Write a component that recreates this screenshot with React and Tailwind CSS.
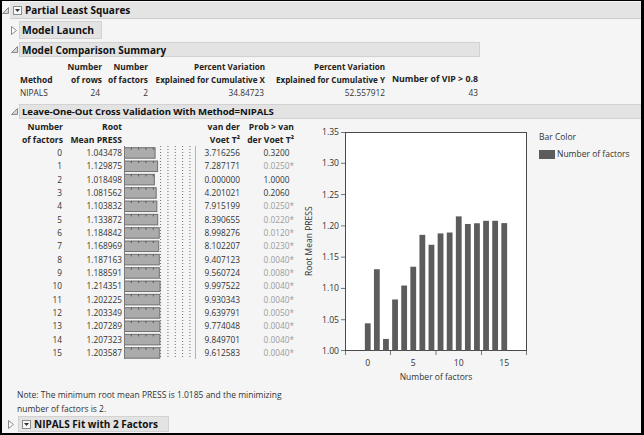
const rows = [
  [0, "1.043478", "3.716256", "0.3200", false],
  [1, "1.129875", "7.287171", "0.0250", true],
  [2, "1.018498", "0.000000", "1.0000", false],
  [3, "1.081562", "4.201021", "0.2060", false],
  [4, "1.103832", "7.915199", "0.0250", true],
  [5, "1.133872", "8.390655", "0.0220", true],
  [6, "1.184842", "8.998276", "0.0120", true],
  [7, "1.168969", "8.102207", "0.0230", true],
  [8, "1.187163", "9.407123", "0.0040", true],
  [9, "1.188591", "9.560724", "0.0080", true],
  [10, "1.214351", "9.997522", "0.0040", true],
  [11, "1.202225", "9.930343", "0.0040", true],
  [12, "1.203349", "9.639791", "0.0050", true],
  [13, "1.207289", "9.774048", "0.0040", true],
  [14, "1.207323", "9.849701", "0.0040", true],
  [15, "1.203587", "9.612583", "0.0040", true],
];

const ROW_H = 13.333;

function OpenTri() {
  return (
    <svg width="7" height="7" viewBox="0 0 7 7" className="block">
      <path d="M6.5 0.5 L6.5 6.5 L0.5 6.5 Z" fill="#d6d6d6" stroke="#8a8a8a" />
    </svg>
  );
}

function ClosedTri() {
  return (
    <svg width="6" height="9" viewBox="0 0 6 9" className="block">
      <path d="M0.5 0.5 L5.5 4.5 L0.5 8.5 Z" fill="#fff" stroke="#8a8a8a" />
    </svg>
  );
}

function MenuBox() {
  return (
    <span className="flex h-[9px] w-[9px] shrink-0 items-center justify-center border border-[#8c8c8c] bg-[#f8f8f8]">
      <svg width="5" height="3" viewBox="0 0 5 3" className="block">
        <path d="M0 0 H5 L2.5 3 Z" fill="#333" />
      </svg>
    </span>
  );
}

// little bar graph column inside the cross validation table
function PressBars() {
  const w = 72;
  const h = rows.length * ROW_H;
  const scale = 29.3;
  return (
    <svg width={w} height={h} className="block">
      {[1.25, 1.5, 1.75, 2, 2.25].map((v) => (
        <line key={v} x1={v * scale} x2={v * scale} y1="0" y2={h} stroke="#6e6e6e" strokeDasharray="1 2" />
      ))}
      {rows.map(([n, rmp], i) => {
        const bw = parseFloat(rmp) * scale;
        const y = i * ROW_H + 1.2;
        return (
          <g key={n}>
            <rect x="0.5" y={y + 0.5} width={bw} height="10.5" fill="#ababab" stroke="#6f6f6f" />
            {[1, 2, 3, 4].map((k) => (
              <line key={k} x1={k * scale * 0.25} x2={k * scale * 0.25} y1={y + 0.5} y2={y + 2.5} stroke="#555" />
            ))}
          </g>
        );
      })}
      <line x1="0.5" x2="0.5" y1="0" y2={h} stroke="#7a7a7a" />
      <line x1={w - 0.5} x2={w - 0.5} y1="0" y2={h} stroke="#b4b4b4" />
    </svg>
  );
}

function PressChart() {
  const W = 182;
  const H = 219;
  const ux = 9.1;
  const uy = 625.7;
  return (
    <svg width={W} height={H} className="block overflow-visible">
      <rect x="0.5" y="0.5" width={W - 1} height={H - 1} fill="#fff" stroke="#4a4a4a" />
      {rows.map(([n, rmp]) => {
        const cx = (n + 2.5) * ux;
        const bh = (parseFloat(rmp) - 1) * uy;
        return <rect key={n} x={cx - 2.9} y={H - 0.5 - bh} width="5.8" height={bh} fill="#5c5c5c" />;
      })}
      {[0, 1, 2, 3, 4, 5, 6, 7].map((k) => {
        const y = Math.min(H - 0.5, Math.max(0.5, H - k * 0.05 * uy));
        return <line key={k} x1="-4" x2="0" y1={y} y2={y} stroke="#777" />;
      })}
      {[0, 45.5, 91, 136.5, 182].map((x) => {
        const xx = Math.min(W - 0.5, Math.max(0.5, x));
        return <line key={x} x1={xx} x2={xx} y1={H} y2={H + 4} stroke="#777" />;
      })}
    </svg>
  );
}

export default function App() {
  return (
    <div className="h-[435px] w-[644px] overflow-hidden bg-black pb-[2px] pl-[2px] pr-[3px] pt-[1px] font-['Open_Sans',sans-serif] text-[#222]">
      <div className="flex h-full flex-col bg-[#f5f5f5]">
        {/* ── Partial Least Squares ── */}
        <div className="mt-[1px] flex h-[17px] items-center">
          <div className="flex w-[8px] justify-start">
            <OpenTri />
          </div>
          <div className="flex h-full flex-1 items-center border-b border-[#cdcdcd] bg-[#e4e4e4] pl-[3px]">
            <MenuBox />
            <span className="ml-[3px] text-[10px] font-bold leading-none text-[#111]">Partial Least Squares</span>
          </div>
        </div>

        {/* ── Model Launch ── */}
        <div className="mt-[2px] flex h-[18px] items-center">
          <div className="flex w-[17px] justify-end pr-[2px]">
            <ClosedTri />
          </div>
          <div className="flex h-full w-[83px] items-center border border-[#d2d2d2] bg-[#e3e3e3] pl-[2px]">
            <span className="text-[10.3px] font-bold leading-none text-[#111]">Model Launch</span>
          </div>
        </div>

        {/* ── Model Comparison Summary ── */}
        <div className="mt-[3px] flex h-[15px] items-center">
          <div className="flex w-[17px] justify-end pr-[1px]">
            <OpenTri />
          </div>
          <div className="flex h-full w-[461px] items-center border border-[#d2d2d2] bg-[#e3e3e3] pl-[2px]">
            <span className="text-[10px] font-bold leading-none text-[#111]">Model Comparison Summary</span>
          </div>
        </div>

        <div className="ml-[17px] mt-[3px] grid grid-cols-[41px_42px_46px_117px_120px_93px] text-right">
          <div className="flex flex-col justify-end pl-[1px] text-left text-[8.4px] font-bold leading-[13px]">Method</div>
          <div className="text-[8.4px] font-bold leading-[13px]">Number<br />of rows</div>
          <div className="text-[8.4px] font-bold leading-[13px]">Number<br />of factors</div>
          <div className="text-[8.1px] font-bold leading-[13px]">Percent Variation<br />Explained for Cumulative X</div>
          <div className="text-[8.1px] font-bold leading-[13px]">Percent Variation<br />Explained for Cumulative Y</div>
          <div className="flex flex-col justify-end text-[8.8px] font-bold leading-[13px]">Number of VIP &gt; 0.8</div>
          <div className="pl-[1px] text-left text-[8.3px] leading-[13px] text-[#333]">NIPALS</div>
          <div className="pr-[2px] text-[8.3px] leading-[13px] text-[#333]">24</div>
          <div className="text-[8.3px] leading-[13px] text-[#333]">2</div>
          <div className="pr-[1px] text-[8.3px] leading-[13px] text-[#333]">34.84723</div>
          <div className="text-[8.3px] leading-[13px] text-[#333]">52.557912</div>
          <div className="text-[8.3px] leading-[13px] text-[#333]">43</div>
        </div>

        {/* ── Leave-One-Out Cross Validation ── */}
        <div className="mt-[5px] flex h-[15px] items-center">
          <div className="flex w-[17px] justify-end pr-[1px]">
            <OpenTri />
          </div>
          <div className="flex h-full flex-1 items-center border-y border-l border-[#d2d2d2] bg-[#e3e3e3] pl-[2px]">
            <span className="text-[9.6px] font-bold leading-none tracking-[-0.1px] text-[#111]">Leave-One-Out Cross Validation With Method=NIPALS</span>
          </div>
        </div>

        <div className="flex items-start">
          {/* table */}
          <div className="ml-[17px] mt-[2px] flex text-right">
            <div className="w-[45px] pr-[1px]">
              <div className="h-[25px] text-[8.6px] font-bold leading-[12.5px]">Number<br />of factors</div>
              {rows.map(([n]) => (
                <div key={n} className="h-[13.333px] pr-[1px] text-[8.3px] leading-[13.333px] text-[#333]">{n}</div>
              ))}
            </div>
            <div className="w-[58px]">
              <div className="h-[25px] text-[8.6px] font-bold leading-[12.5px]">Root<br />Mean PRESS</div>
              {rows.map(([n, rmp]) => (
                <div key={n} className="h-[13.333px] text-[8.3px] leading-[13.333px] text-[#333]">{rmp}</div>
              ))}
            </div>
            <div className="ml-[2px] w-[72px] pt-[25px]">
              <PressBars />
            </div>
            <div className="w-[44px]">
              <div className="h-[25px] text-[8.6px] font-bold leading-[12.5px]">van der<br />Voet T²</div>
              {rows.map(([n, , vdv]) => (
                <div key={n} className="h-[13.333px] text-[8.3px] leading-[13.333px] text-[#333]">{vdv}</div>
              ))}
            </div>
            <div className="w-[54px]">
              <div className="h-[25px] whitespace-nowrap text-[8.6px] font-bold leading-[12.5px]">Prob &gt; van<br />der Voet T²</div>
              {rows.map(([n, , , p, sig]) => (
                <div
                  key={n}
                  className={sig ? "h-[13.333px] text-[8.3px] leading-[13.333px] text-[#9c9c9c]" : "h-[13.333px] text-[8.3px] leading-[13.333px] text-[#333]"}
                >
                  {p}
                  <span className={sig ? "" : "invisible"}>*</span>
                </div>
              ))}
            </div>
          </div>

          {/* chart */}
          <div className="ml-[8px] mt-[7px] flex items-start">
            <div className="flex h-[231px] w-[14px] items-center justify-center">
              <span className="-rotate-90 whitespace-nowrap text-[8.5px] leading-none text-[#333]">Root Mean PRESS</span>
            </div>
            <div className="flex h-[231px] w-[23px] flex-col items-end justify-between">
              {["1.35", "1.30", "1.25", "1.20", "1.15", "1.10", "1.05", "1.00"].map((t) => (
                <div key={t} className="h-[12px] text-[8.6px] leading-[12px] text-[#333]">{t}</div>
              ))}
            </div>
            <div className="ml-[6px] mt-[6px] flex flex-col">
              <PressChart />
              <div className="mt-[6px] flex w-[182px]">
                {["0", "5", "10", "15"].map((t) => (
                  <div key={t} className="h-[12px] w-[45.5px] text-center text-[8.6px] leading-[12px] text-[#333]">{t}</div>
                ))}
              </div>
              <div className="mt-[2px] h-[12px] text-center text-[8.5px] leading-[12px] text-[#333]">Number of factors</div>
            </div>
            <div className="ml-[12px] mt-[5px] flex flex-col">
              <div className="h-[12px] text-[8.5px] leading-[12px] text-[#333]">Bar Color</div>
              <div className="mt-[5px] flex items-center">
                <span className="h-[9px] w-[16px] bg-[#5c5c5c]" />
                <span className="ml-[2px] text-[8.5px] leading-[12px] text-[#333]">Number of factors</span>
              </div>
            </div>
          </div>
        </div>

        {/* ── Note ── */}
        <div className="ml-[15px] mt-[5px] text-[8.5px] leading-[14px] text-[#333]">
          Note: The minimum root mean PRESS is 1.0185 and the minimizing
          <br />
          number of factors is 2.
        </div>

        {/* ── NIPALS Fit ── */}
        <div className="flex h-[16px] items-center">
          <div className="flex w-[16px] justify-end pr-[4px]">
            <ClosedTri />
          </div>
          <div className="flex h-full w-[151px] items-center border border-[#d2d2d2] bg-[#e3e3e3] pl-[3px]">
            <MenuBox />
            <span className="ml-[3px] text-[10px] font-bold leading-none text-[#111]">NIPALS Fit with 2 Factors</span>
          </div>
        </div>
      </div>
    </div>
  );
}
